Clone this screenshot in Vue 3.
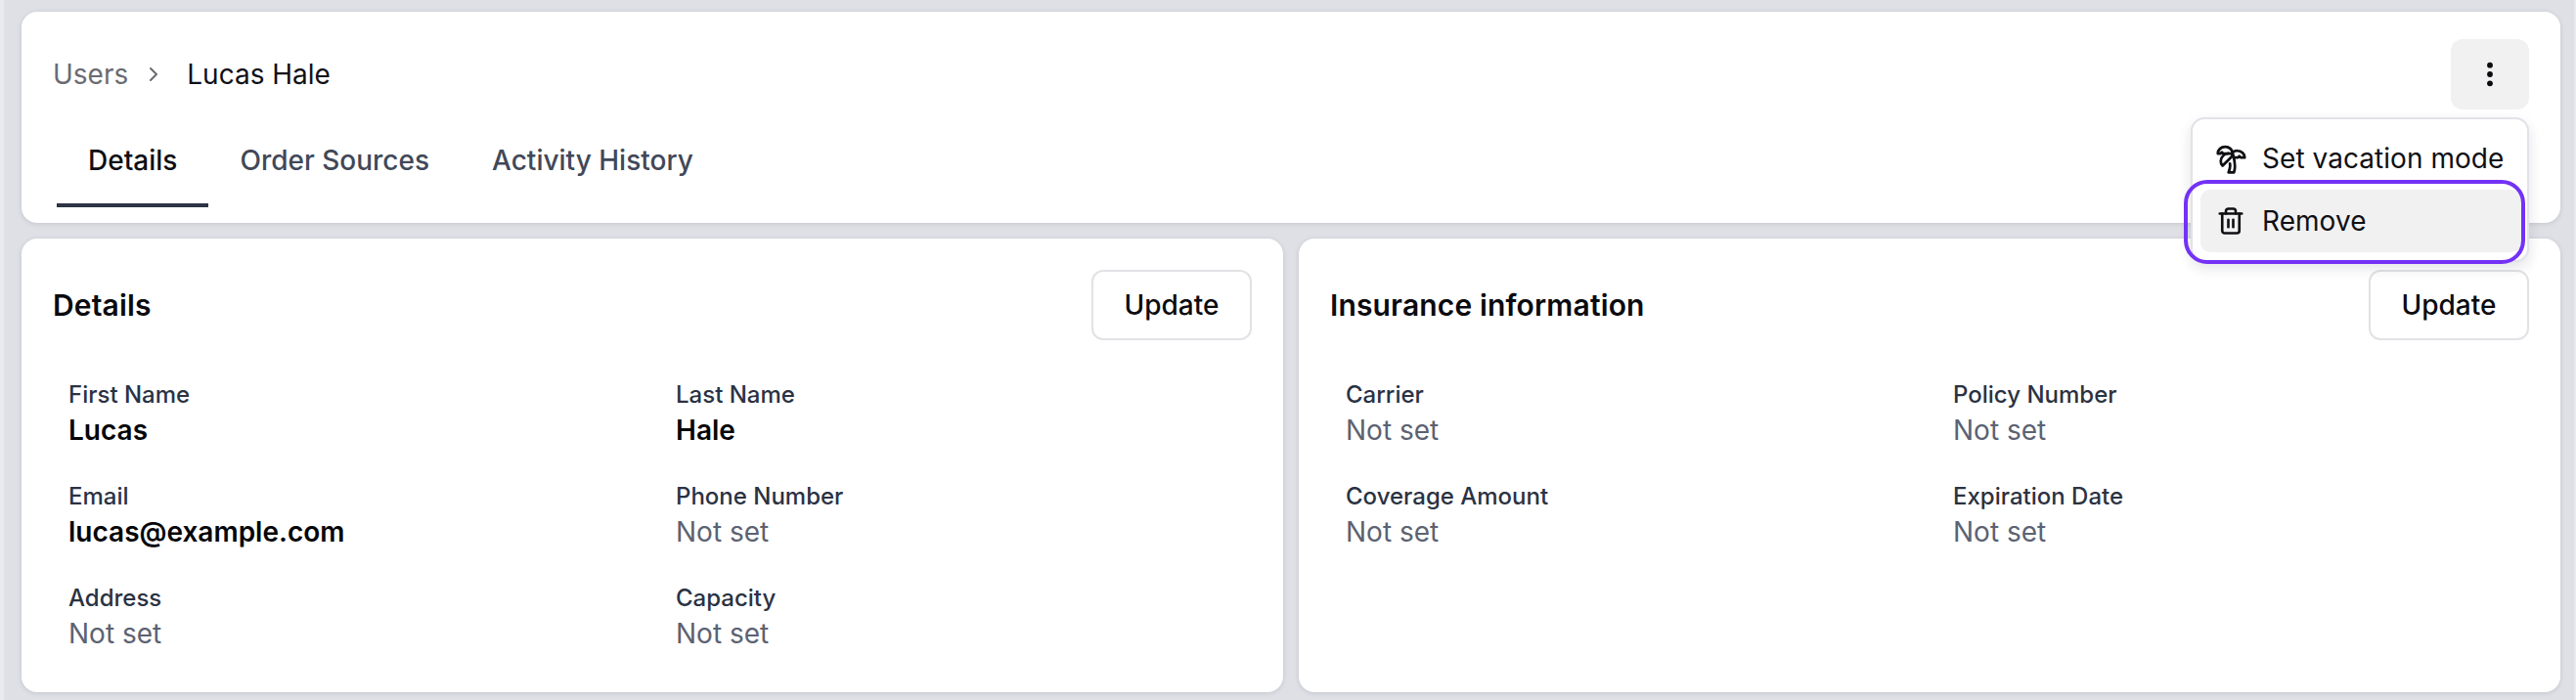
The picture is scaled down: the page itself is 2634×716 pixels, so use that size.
<script setup>
const details = [
  { label: 'First Name', value: 'Lucas', set: true },
  { label: 'Last Name', value: 'Hale', set: true },
  { label: 'Email', value: 'lucas@example.com', set: true },
  { label: 'Phone Number', value: 'Not set' },
  { label: 'Address', value: 'Not set' },
  { label: 'Capacity', value: 'Not set' },
]
const insurance = [
  { label: 'Carrier', value: 'Not set' },
  { label: 'Policy Number', value: 'Not set' },
  { label: 'Coverage Amount', value: 'Not set' },
  { label: 'Expiration Date', value: 'Not set' },
]
const sections = [
  { title: 'Details', fields: details },
  { title: 'Insurance information', fields: insurance },
]
</script>

<template>
  <div class="page">
    <header class="card head">
      <div class="crumbs">
        <span class="crumb-muted">Users</span>
        <svg class="chev" viewBox="0 0 24 24" fill="none" stroke="currentColor" stroke-width="2" stroke-linecap="round" stroke-linejoin="round"><path d="m9 6 6 6-6 6" /></svg>
        <span class="crumb-current">Lucas Hale</span>
      </div>
      <nav class="tabs">
        <span class="tab active">Details</span>
        <span class="tab">Order Sources</span>
        <span class="tab">Activity History</span>
      </nav>
      <button class="more" aria-label="More">
        <svg viewBox="0 0 28 28" fill="currentColor" width="28" height="28"><circle cx="14" cy="4.700" r="2.900" /><circle cx="14" cy="14" r="2.900" /><circle cx="14" cy="23.300" r="2.900" /></svg>
      </button>
      <div class="menu">
        <div class="item">
          <svg class="ico palm" viewBox="0 0 24 24" fill="none" stroke="currentColor" stroke-width="2" stroke-linecap="round" stroke-linejoin="round"><path d="M13 8c0-2.760-2.460-5-5.500-5S2 5.240 2 8h2l1-1 1 1h4" /><path d="M13 7.140A5.820 5.820 0 0 1 16.500 6c3.040 0 5.500 2.240 5.500 5h-3l-1-1-1 1h-3" /><path d="M5.890 9.710c-2.150 2.150-2.300 5.470-.35 7.430l4.240-4.250.7-.7.71-.71 2.120-2.120c-1.950-1.960-5.270-1.800-7.420.35" /><path d="M11 15.500c.5 2.500-.17 4.500-1 6.500h4c2-5.500-.5-12-1-14" /></svg>
          <span>Set vacation mode</span>
        </div>
        <div class="item focused">
          <svg class="ico" viewBox="0 0 24 24" fill="none" stroke="currentColor" stroke-width="2.100" stroke-linecap="round" stroke-linejoin="round"><path d="M3 6h18" /><path d="M19 6v14a2 2 0 0 1-2 2H7a2 2 0 0 1-2-2V6" /><path d="M8 6V4a2 2 0 0 1 2-2h4a2 2 0 0 1 2 2v2" /><path d="M10 11v6" /><path d="M14 11v6" /></svg>
          <span>Remove</span>
        </div>
        <div class="ring"></div>
      </div>
    </header>
    <main class="columns">
      <section v-for="s in sections" :key="s.title" class="card panel">
        <div class="panel-head">
          <h2>{{ s.title }}</h2>
          <button class="update">Update</button>
        </div>
        <dl class="grid">
          <div v-for="f in s.fields" :key="f.label" class="field">
            <dt>{{ f.label }}</dt>
            <dd :class="{ set: f.set }">{{ f.value }}</dd>
          </div>
        </dl>
      </section>
    </main>
  </div>
</template>

<style>
html, body { margin: 0; background: #e9eaee; }
</style>

<style scoped>
.page {
  box-sizing: border-box;
  width: 2628px;
  height: 716px;
  margin-left: 4px;
  background: #dfe0e6;
  padding: 12px 14px 8px 18px;
  display: flex;
  flex-direction: column;
  gap: 16px;
  font-family: Inter, "Liberation Sans", sans-serif;
  color: #0b0b0f;
}
.card {
  background: #fff;
  border-radius: 16px;
  box-shadow: 0 1px 5px rgba(16, 24, 40, 0.13);
}
.head {
  position: relative;
  height: 216px;
  box-sizing: border-box;
  padding: 42px 32px 0 32px;
  flex: none;
}
.crumbs {
  display: flex;
  align-items: center;
  height: 44px;
  font-size: 28px;
}
.crumb-muted { color: #6a6b72; }
.chev { width: 24px; height: 24px; color: #6a6b72; margin: 0 22px 0 14px; }
.crumb-current { color: #101018; }
.tabs {
  display: flex;
  margin-top: 36px;
  padding-left: 4px;
}
.tab {
  padding: 13px 32px 0;
  height: 78px;
  box-sizing: border-box;
  font-size: 28px;
  font-weight: 500;
  color: #414858;
  border-bottom: 4px solid transparent;
}
.tab.active { color: #0e0e14; border-bottom-color: #2d3445; }
.more {
  position: absolute;
  top: 28px;
  right: 32px;
  width: 80px;
  height: 72px;
  border: 0;
  border-radius: 12px;
  background: #f1f1f2;
  color: #0b0b0f;
  display: flex;
  align-items: center;
  justify-content: center;
  padding: 0;
}
.menu {
  position: absolute;
  z-index: 2;
  top: 108px;
  right: 32px;
  width: 346px;
  box-sizing: border-box;
  background: #fff;
  border: 2px solid #e2e2e8;
  border-radius: 14px;
  padding: 8px 6px 8px 8px;
  box-shadow: 0 6px 14px rgba(16, 24, 40, 0.12);
}
.item {
  display: flex;
  align-items: center;
  gap: 17px;
  height: 64px;
  padding: 0 0 0 16px;
  font-size: 28px;
  color: #101014;
  border-radius: 10px;
  white-space: nowrap;
  letter-spacing: 0.05px;
}
.ico { width: 30px; height: 30px; flex: none; }
.ico.palm { width: 33px; height: 33px; margin: 0 -2px 0 -1px; }
.item.focused { background: #f1f1f2; }
.ring {
  position: absolute;
  left: -9px;
  right: 2px;
  bottom: -4px;
  height: 86px;
  box-sizing: border-box;
  border: 4px solid #7332f5;
  border-radius: 24px;
}
.columns {
  display: grid;
  grid-template-columns: 1fr 1fr;
  gap: 16px;
  flex: 1;
}
.panel { padding: 32px; }
.panel-head {
  display: flex;
  align-items: center;
  justify-content: space-between;
  height: 72px;
}
h2 { margin: 0; font-size: 30px; font-weight: 600; color: #0b0b0f; letter-spacing: 0.15px; }
.update {
  width: 164px;
  height: 72px;
  background: #fff;
  border: 2px solid #e2e2e6;
  border-radius: 12px;
  font: 500 28px Inter, "Liberation Sans", sans-serif;
  color: #0b0b0f;
  padding: 0;
}
.grid {
  display: grid;
  grid-template-columns: 1fr 1fr;
  row-gap: 24px;
  column-gap: 48px;
  margin: 38px 0 0;
  padding: 0 16px;
}
.field { height: 80px; }
dt { font-size: 24px; line-height: 36px; font-weight: 500; color: #2b3242; }
dd { margin: 0; font-size: 28px; line-height: 37px; color: #5c6272; }
dd.set { color: #050507; font-weight: 600; }
</style>
